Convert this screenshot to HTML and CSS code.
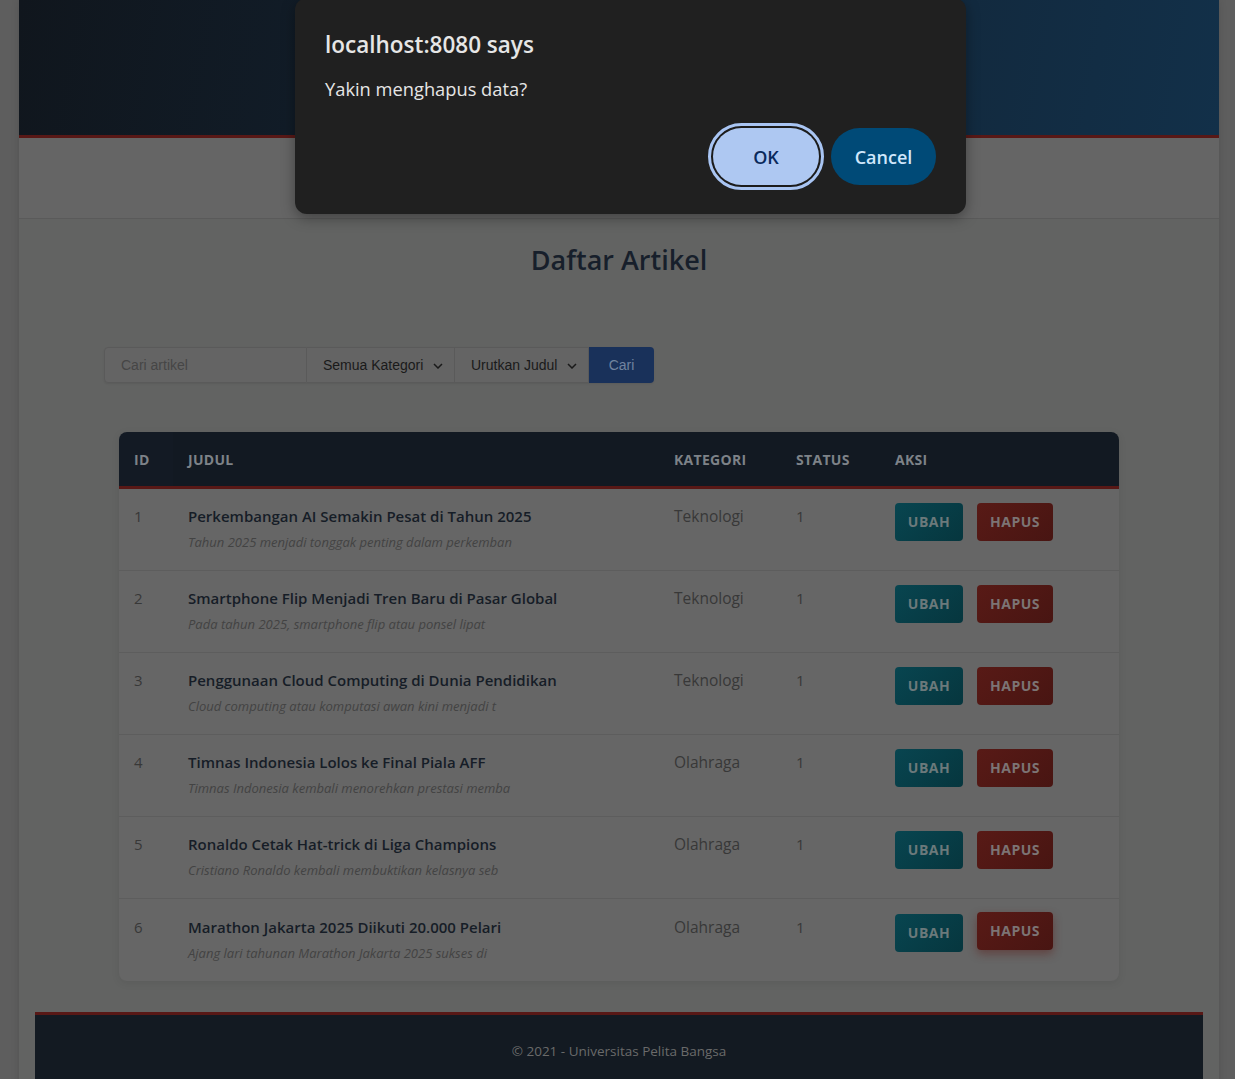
FILE: index.html
```html
<!DOCTYPE html>
<html lang="id">
<head>
<meta charset="utf-8">
<title>Daftar Artikel</title>
<link rel="stylesheet" href="styles.css">
</head>
<body>
<div class="page">
  <header class="site-header"></header>
  <nav class="site-nav"></nav>
  <main class="main">
    <h2 class="title">Daftar Artikel</h2>
    <div class="form-wrap">
      <form class="search">
        <div class="search-input">Cari artikel</div>
        <div class="search-select s1">Semua Kategori
          <svg class="chev" width="10" height="6" viewBox="0 0 10 6"><path d="M1 1l4 4 4-4" fill="none" stroke="#1a1a1a" stroke-width="1.5"/></svg>
        </div>
        <div class="search-select s2">Urutkan Judul
          <svg class="chev" width="10" height="6" viewBox="0 0 10 6"><path d="M1 1l4 4 4-4" fill="none" stroke="#1a1a1a" stroke-width="1.5"/></svg>
        </div>
        <div class="search-btn">Cari</div>
      </form>
    </div>
    <div class="table-wrap">
      <table class="table">
        <thead>
          <tr>
            <th class="c-id">ID</th>
            <th class="c-judul">Judul</th>
            <th class="c-kat">Kategori</th>
            <th class="c-status">Status</th>
            <th class="c-aksi">Aksi</th>
          </tr>
        </thead>
        <tbody>
          <tr>
            <td class="c-id">1</td>
            <td class="c-judul"><div class="t">Perkembangan AI Semakin Pesat di Tahun 2025</div><div class="d">Tahun 2025 menjadi tonggak penting dalam perkemban</div></td>
            <td class="c-kat">Teknologi</td>
            <td class="c-status">1</td>
            <td class="c-aksi"><span class="btn ubah">UBAH</span><span class="btn hapus">HAPUS</span></td>
          </tr>
          <tr>
            <td class="c-id">2</td>
            <td class="c-judul"><div class="t">Smartphone Flip Menjadi Tren Baru di Pasar Global</div><div class="d">Pada tahun 2025, smartphone flip atau ponsel lipat</div></td>
            <td class="c-kat">Teknologi</td>
            <td class="c-status">1</td>
            <td class="c-aksi"><span class="btn ubah">UBAH</span><span class="btn hapus">HAPUS</span></td>
          </tr>
          <tr>
            <td class="c-id">3</td>
            <td class="c-judul"><div class="t">Penggunaan Cloud Computing di Dunia Pendidikan</div><div class="d">Cloud computing atau komputasi awan kini menjadi t</div></td>
            <td class="c-kat">Teknologi</td>
            <td class="c-status">1</td>
            <td class="c-aksi"><span class="btn ubah">UBAH</span><span class="btn hapus">HAPUS</span></td>
          </tr>
          <tr>
            <td class="c-id">4</td>
            <td class="c-judul"><div class="t">Timnas Indonesia Lolos ke Final Piala AFF</div><div class="d">Timnas Indonesia kembali menorehkan prestasi memba</div></td>
            <td class="c-kat">Olahraga</td>
            <td class="c-status">1</td>
            <td class="c-aksi"><span class="btn ubah">UBAH</span><span class="btn hapus">HAPUS</span></td>
          </tr>
          <tr>
            <td class="c-id">5</td>
            <td class="c-judul"><div class="t">Ronaldo Cetak Hat-trick di Liga Champions</div><div class="d">Cristiano Ronaldo kembali membuktikan kelasnya seb</div></td>
            <td class="c-kat">Olahraga</td>
            <td class="c-status">1</td>
            <td class="c-aksi"><span class="btn ubah">UBAH</span><span class="btn hapus">HAPUS</span></td>
          </tr>
          <tr>
            <td class="c-id">6</td>
            <td class="c-judul"><div class="t">Marathon Jakarta 2025 Diikuti 20.000 Pelari</div><div class="d">Ajang lari tahunan Marathon Jakarta 2025 sukses di</div></td>
            <td class="c-kat">Olahraga</td>
            <td class="c-status">1</td>
            <td class="c-aksi"><span class="btn ubah">UBAH</span><span class="btn hapus is-hover">HAPUS</span></td>
          </tr>
        </tbody>
      </table>
    </div>
  </main>
  <footer class="site-footer">© 2021 - Universitas Pelita Bangsa</footer>
</div>

<div class="dialog" role="alertdialog">
  <div class="dialog-title">localhost:8080 says</div>
  <div class="dialog-msg">Yakin menghapus data?</div>
  <div class="dialog-actions">
    <span class="dbtn ok">OK</span>
    <span class="dbtn cancel">Cancel</span>
  </div>
</div>
</body>
</html>
```

FILE: styles.css
```css
html, body {
  margin: 0;
  padding: 0;
}
body {
  background: #5e5e5e;
  font-family: "Open Sans", "Noto Sans", sans-serif;
  height: 1079px;
  overflow: hidden;
}
.page {
  width: 1200px;
  margin-left: 19px;
  background: #626362;
  box-shadow: 0 0 8px rgba(0,0,0,0.12);
  min-height: 1079px;
}
.site-header {
  height: 135px;
  background: linear-gradient(100deg, #10161d 0%, #122130 45%, #123049 100%);
  border-bottom: 3px solid #581816;
}
.site-nav {
  height: 80px;
  background: #656565;
  border-bottom: 1px solid #5a5a5a;
}
.main {
  padding-top: 24px;
  padding-bottom: 31px;
}
.title {
  margin: 0;
  text-align: center;
  font-size: 27px;
  font-weight: 600;
  line-height: 34px;
  color: #171f2b;
}
.form-wrap {
  width: 1030px;
  margin: 69px auto 0;
  padding-top: 1px;
}
.search {
  display: inline-flex;
  height: 36px;
  margin: 0;
  font-family: "Liberation Sans", Arial, sans-serif;
  font-size: 14px;
  border-radius: 4px;
  box-shadow: 0 1px 2px rgba(0,0,0,0.08);
}
.search > div {
  box-sizing: border-box;
}
.search-input {
  width: 203px;
  padding-left: 16px;
  display: flex;
  align-items: center;
  color: #464646;
  background: #646464;
  border: 1px solid #5a5a5a;
  border-radius: 4px 0 0 4px;
}
.search-select {
  display: flex;
  align-items: center;
  justify-content: space-between;
  color: #1a1a1a;
  background: #646464;
  border: 1px solid #5a5a5a;
  border-left: none;
  padding: 0 11px 0 16px;
}
.s1 { width: 148px; }
.s2 { width: 134px; }
.chev { margin-top: 1px; }
.search-btn {
  width: 65px;
  display: flex;
  align-items: center;
  justify-content: center;
  background: #19315a;
  color: #71849f;
  border-radius: 0 4px 4px 0;
}
.table-wrap {
  width: 1000px;
  margin: 49px auto 0;
  border-radius: 8px;
  background: #666666;
  box-shadow: 0 2px 8px rgba(0,0,0,0.08);
  overflow: hidden;
}
.table {
  width: 1000px;
  border-collapse: collapse;
  table-layout: fixed;
}
.table th {
  height: 53px;
  padding: 1px 15px 0;
  text-align: left;
  font-size: 14px;
  font-weight: 700;
  letter-spacing: 0.3px;
  text-transform: uppercase;
  color: #7d8288;
  background: #121922;
  border-bottom: 3px solid #581816;
}
.table th.c-id { background: #131a24; }
.c-id { width: 24px; }
.c-judul { width: 456px; }
.c-kat { width: 92px; }
.c-status { width: 69px; }
.c-aksi { width: 209px; }
.table td {
  padding: 16px 15px 0;
  height: 65px;
  vertical-align: top;
  border-bottom: 1px solid #5d5d5d;
  color: #383838;
  font-size: 15px;
  line-height: 22px;
}
.table tr:last-child td {
  border-bottom: none;
  padding-top: 17px;
  height: 65px;
}
.table tr:last-child td.c-aksi { padding-top: 15px; }
.table td.c-kat { font-size: 15.5px; }
.t {
  font-weight: 600;
  color: #161d27;
  font-size: 15px;
}
.d {
  margin-top: 6px;
  font-style: italic;
  font-size: 13px;
  line-height: 18px;
  color: #434343;
}
.table td.c-aksi {
  padding-top: 14px;
}
.btn {
  display: inline-flex;
  align-items: center;
  justify-content: center;
  height: 38px;
  box-sizing: border-box;
  border-radius: 4px;
  font-size: 14px;
  font-weight: 700;
  letter-spacing: 0.5px;
  vertical-align: top;
}
.ubah {
  width: 68px;
  background: linear-gradient(135deg, #084550, #06363e);
  color: #6b797b;
}
.hapus {
  width: 76px;
  margin-left: 14px;
  background: linear-gradient(135deg, #581a16, #481512);
  color: #7c7474;
}
.hapus.is-hover {
  transform: translateY(-2px);
  box-shadow: 0 4px 10px rgba(90,22,18,0.45);
}
.site-footer {
  margin: 0 16px;
  height: 80px;
  box-sizing: border-box;
  background: #131a22;
  border-top: 3px solid #581816;
  display: flex;
  align-items: flex-start;
  justify-content: center;
  color: #6a6a6a;
  font-size: 13.5px;
  line-height: 19px;
  padding-top: 27px;
}

/* browser alert dialog */
.dialog {
  position: absolute;
  top: -2px;
  left: 295px;
  width: 671px;
  height: 216px;
  box-sizing: border-box;
  padding: 28px 30px 0 30px;
  background: #202020;
  border-radius: 12px;
  box-shadow: 0 4px 14px rgba(0,0,0,0.35);
  font-family: "Open Sans", "Noto Sans", sans-serif;
  color: #e6e6e6;
}
.dialog-title {
  font-size: 22.5px;
  font-weight: 600;
  line-height: 30px;
  margin-top: 4px;
}
.dialog-msg {
  font-size: 18.3px;
  line-height: 26px;
  margin-top: 16px;
}
.dialog-actions {
  display: flex;
  justify-content: flex-end;
  gap: 12px;
  margin-top: 26px;
}
.dbtn {
  display: inline-flex;
  align-items: center;
  justify-content: center;
  height: 57px;
  border-radius: 29px;
  font-size: 18px;
  font-weight: 600;
}
.ok {
  width: 106px;
  background: #aec8f2;
  color: #0a2a5c;
  outline: 3px solid #a9c5f3;
  outline-offset: 2px;
  box-shadow: 0 0 0 2px #1c1c1c;
}
.cancel {
  width: 105px;
  background: #004a77;
  color: #cfe6fb;
}
```
